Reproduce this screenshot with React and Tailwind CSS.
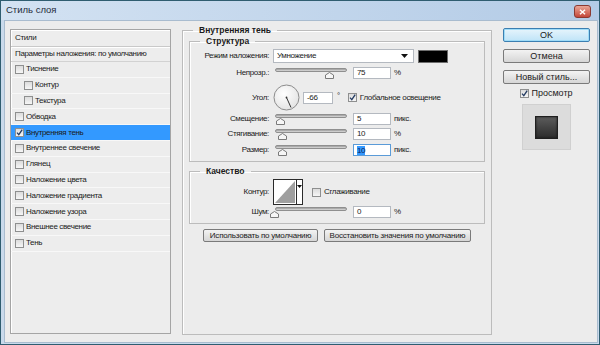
import React from "react";

const font = "font-['Liberation_Sans',Arial,sans-serif]";

const styles = [
  { name: "Тиснение", sub: false },
  { name: "Контур", sub: true },
  { name: "Текстура", sub: true },
  { name: "Обводка", sub: false },
  { name: "Внутренняя тень", sub: false, checked: true, active: true },
  { name: "Внутреннее свечение", sub: false },
  { name: "Глянец", sub: false },
  { name: "Наложение цвета", sub: false },
  { name: "Наложение градиента", sub: false },
  { name: "Наложение узора", sub: false },
  { name: "Внешнее свечение", sub: false },
  { name: "Тень", sub: false },
];

const Check = ({ checked }) => (
  <div className="relative size-[9px] shrink-0 border border-[#8e8f8f] bg-linear-to-b from-[#dcdcdc] to-[#f6f6f6]">
    {checked && (
      <svg viewBox="0 0 9 9" className="absolute -left-px -top-px size-[9px]">
        <path d="M2 4.6 L3.8 6.6 L7.2 1.6" fill="none" stroke="#243c63" strokeWidth="1.3" />
      </svg>
    )}
  </div>
);

const Field = ({ value, width = "w-[38px]", selected }) => (
  <div
    className={`flex h-[12px] items-center bg-white pl-[3px] ${width} border ${
      selected ? "border-[#5a9bd8]" : "border-[#b4b9c0]"
    }`}
  >
    <span className={selected ? "bg-[#3399ff] text-[#0d2358] leading-[9px]" : ""}>{value}</span>
  </div>
);

const Slider = ({ pos }) => (
  <div className="relative h-[12px] w-[74px]">
    <div className="ml-[2px] mt-[1px] h-[4px] w-[72px] rounded-full border border-[#8f8f8f] bg-linear-to-b from-[#9a9a9a] to-[#dedede]" />
    <svg viewBox="0 0 9 7" className="absolute top-[5px] h-[7px] w-[9px]" style={{ left: pos + 2 - 4.5 }}>
      <polygon points="0.5,6.5 0.5,3 4.5,0.5 8.5,3 8.5,6.5" fill="#f6f6f6" stroke="#7a7a7a" />
    </svg>
  </div>
);

const Label = ({ children }) => <div className="w-[80px] shrink-0 pr-[1px] text-right">{children}</div>;

const Row = ({ className = "", children }) => (
  <div className={`flex items-center gap-[3px] ${className}`}>{children}</div>
);

const Button = ({ children, className = "", primary }) => (
  <div
    className={`flex items-center justify-center whitespace-nowrap rounded-[2px] border ${
      primary
        ? "border-[#3c7fb1] bg-linear-to-b from-[#e6f4fc] to-[#bfe4f8] shadow-[inset_0_0_0_1px_#9fdcf8]"
        : "border-[#7a7a7a] bg-linear-to-b from-[#f3f3f3] to-[#d6d6d6]"
    } ${className}`}
  >
    {children}
  </div>
);

const legend = "px-[6px] text-[8.5px] font-bold leading-[11px] tracking-normal";

export default function App() {
  return (
    <div className={`flex h-[345px] w-[600px] flex-col overflow-hidden border border-[#2f5d70] bg-[#c9daec] text-[#1b1b1b] ${font}`}>
      <div className="flex h-[19px] shrink-0 items-center justify-between bg-linear-to-r from-[#d3e2f2] to-[#b3cbe6] pl-[5px] pr-[8px]">
        <span className="text-[9.5px] text-[#1e2a38]">Стиль слоя</span>
        <div className="mt-[2px] flex h-[13px] w-[17px] items-center justify-center rounded-[3px] border border-[#8b3a32] bg-linear-to-b from-[#e9a597] to-[#c3463a]">
          <svg viewBox="0 0 8 7" className="h-[6px] w-[7px]">
            <path d="M1 0.8 L7 6.2 M7 0.8 L1 6.2" stroke="#fff" strokeWidth="1.6" />
          </svg>
        </div>
      </div>

      <div className="mb-[1px] ml-[3px] mr-[1px] flex flex-1 border border-[#a9bccf] bg-[#ececec] pl-[5px] text-[8px] leading-[10px] tracking-[-0.35px]">
        {/* styles list */}
        <div className="mt-[8px] h-[305px] w-[161px] shrink-0 border border-[#a5a5a5] bg-[#ededed] shadow-[inset_1px_1px_0_#fff]">
          <div className="flex h-[17px] items-center border-b border-[#c9c9c9] pl-[4px] shadow-[0_1px_0_#fff]">Стили</div>
          <div className="flex h-[15px] items-center border-b border-[#d2d2d2] pl-[4px]">Параметры наложения: по умолчанию</div>
          {styles.map((s) => (
            <div
              key={s.name}
              className={`flex h-[15.8px] items-center gap-[2px] border-b border-[#f8f8f8] ${s.sub ? "pl-[13px]" : "pl-[4px]"} ${
                s.active ? "bg-[#3399ff]" : ""
              }`}
            >
              <Check checked={s.checked} />
              <span>{s.name}</span>
            </div>
          ))}
        </div>

        {/* settings */}
        <fieldset className="ml-[11px] mt-[4px] h-[310px] w-[310px] shrink-0 border border-[#bcbcbc] px-[6px] shadow-[inset_1px_1px_0_#fff]">
          <legend className={`ml-[4px] ${legend}`}>Внутренняя тень</legend>

          <fieldset className="border border-[#bcbcbc] pb-[5px] pt-[2px] shadow-[inset_1px_1px_0_#fff]">
            <legend className={`ml-[10px] ${legend}`}>Структура</legend>
            <Row className="h-[14px]">
              <Label>Режим наложения:</Label>
              <div className="flex h-[14px] w-[141px] items-center justify-between border border-[#b4b9c0] bg-white pl-[3px] pr-[5px]">
                <span>Умножение</span>
                <svg viewBox="0 0 7 4" className="h-[4px] w-[7px]">
                  <polygon points="0,0 7,0 3.5,4" fill="#111" />
                </svg>
              </div>
              <div className="ml-[1px] h-[13px] w-[30px] border border-[#6e6e6e] bg-black" />
            </Row>
            <Row className="mt-[4px] h-[12px]">
              <Label>Непрозр.:</Label>
              <Slider pos={54.5} />
              <div className="ml-[3px]">
                <Field value="75" />
              </div>
              <span>%</span>
            </Row>
            <Row className="mt-[5px] h-[27px]">
              <Label>Угол:</Label>
              <svg viewBox="0 0 27 27" className="h-[27px] w-[27px]">
                <defs>
                  <radialGradient id="dial" cx="40%" cy="35%" r="70%">
                    <stop offset="0" stopColor="#ffffff" />
                    <stop offset="1" stopColor="#e2e2e2" />
                  </radialGradient>
                </defs>
                <circle cx="13.5" cy="13.5" r="12.5" fill="url(#dial)" stroke="#8c8c8c" />
                <line x1="13.5" y1="13.5" x2="18" y2="23.5" stroke="#333" strokeWidth="1" />
                <circle cx="13.5" cy="13.5" r="0.9" fill="#333" />
              </svg>
              <Field value="-66" width="w-[30px]" />
              <span className="ml-[1px] self-start pt-[7px]">°</span>
              <div className="ml-[5px]">
                <Check checked />
              </div>
              <span>Глобальное освещение</span>
            </Row>
            <Row className="mt-[2px] h-[12px]">
              <Label>Смещение:</Label>
              <Slider pos={5} />
              <div className="ml-[3px]">
                <Field value="5" />
              </div>
              <span>пикс.</span>
            </Row>
            <Row className="mt-[3px] h-[12px]">
              <Label>Стягивание:</Label>
              <Slider pos={7.5} />
              <div className="ml-[3px]">
                <Field value="10" />
              </div>
              <span>%</span>
            </Row>
            <Row className="mt-[4px] h-[12px]">
              <Label>Размер:</Label>
              <Slider pos={7.5} />
              <div className="ml-[3px]">
                <Field value="10" selected />
              </div>
              <span>пикс.</span>
            </Row>
          </fieldset>

          <fieldset className="mt-[4px] border border-[#bcbcbc] pb-[5px] pt-[2px] shadow-[inset_1px_1px_0_#fff]">
            <legend className={`ml-[10px] ${legend}`}>Качество</legend>
            <Row className="h-[26px]">
              <Label>Контур:</Label>
              <div className="flex h-[26px] w-[30px] border border-[#2a2a2a] bg-white">
                <svg viewBox="0 0 22 24" className="h-[24px] w-[22px]" preserveAspectRatio="none">
                  <polygon points="1,23 21,1 21,23" fill="#9f9f9f" />
                </svg>
                <div className="flex w-[6px] items-start justify-center border-l border-[#2a2a2a] pt-[5px]">
                  <svg viewBox="0 0 5 3" className="h-[3px] w-[5px]">
                    <polygon points="0,0 5,0 2.5,3" fill="#111" />
                  </svg>
                </div>
              </div>
              <div className="ml-[6px]">
                <Check />
              </div>
              <span>Сглаживание</span>
            </Row>
            <Row className="mt-[1px] h-[12px]">
              <Label>Шум:</Label>
              <Slider pos={-0.7} />
              <div className="ml-[3px]">
                <Field value="0" />
              </div>
              <span>%</span>
            </Row>
          </fieldset>

          <div className="ml-[14px] mt-[5px] flex gap-[6px] tracking-[-0.2px]">
            <Button className="h-[13px] w-[115px]">Использовать по умолчанию</Button>
            <Button className="h-[13px] w-[147px]">Восстановить значения по умолчанию</Button>
          </div>
        </fieldset>

        {/* buttons */}
        <div className="ml-[11px] flex w-[87px] shrink-0 flex-col text-[9px] tracking-normal">
          <Button primary className="mt-[7px] h-[14px]">OK</Button>
          <Button className="mt-[7px] h-[14px]">Отмена</Button>
          <Button className="mt-[7px] h-[14px]">Новый стиль...</Button>
          <div className="mt-[4px] flex h-[10px] items-center justify-center gap-[2px]">
            <Check checked />
            <span>Просмотр</span>
          </div>
          <div className="ml-[19px] mt-[6px] flex h-[46px] w-[49px] items-center justify-center border border-[#d0d0d0] bg-[#dcdcdc]">
            <div className="size-[23px] border border-[#1f1f1f] bg-linear-to-b from-[#5c5c5c] to-[#2c2c2c] shadow-[inset_0_0_2px_#111]" />
          </div>
        </div>
      </div>
    </div>
  );
}
